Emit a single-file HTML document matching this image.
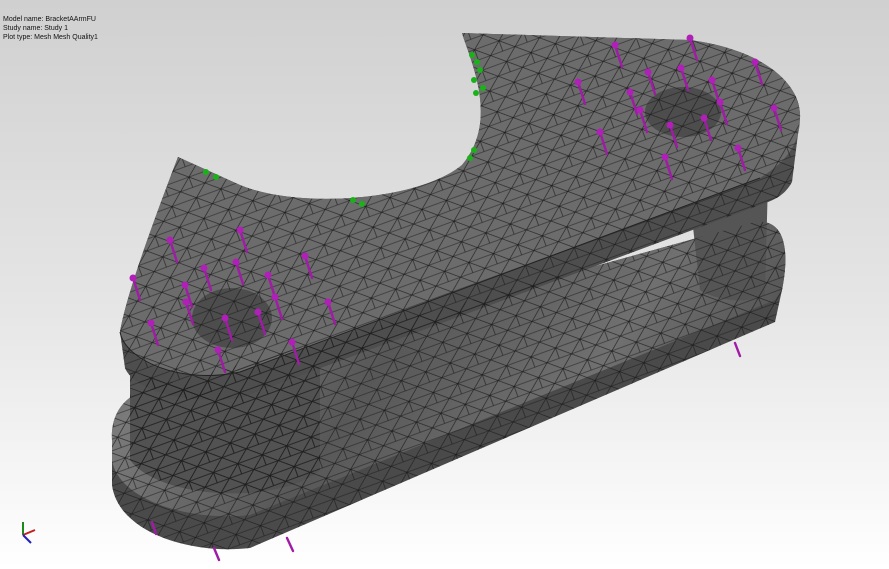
<!DOCTYPE html>
<html><head><style>
html,body{margin:0;padding:0;width:889px;height:569px;overflow:hidden;background:#fff}
.t{position:absolute;left:3px;font:7px/9px "Liberation Sans",sans-serif;color:#111}
</style></head><body>
<svg width="889" height="569" style="position:absolute;left:0;top:0">
<defs>
<linearGradient id="bg" x1="0" y1="0" x2="0" y2="1">
<stop offset="0" stop-color="#d0d0d0"/><stop offset="0.55" stop-color="#e6e6e6"/><stop offset="1" stop-color="#ffffff"/></linearGradient>
<pattern id="mesh" width="26" height="22" patternUnits="userSpaceOnUse" patternTransform="rotate(-20)">
<path d="M0,0 L26,0 M0,11 L26,11 M0,22 L26,22 M0,0 L13,11 L0,22 M13,11 L26,0 M13,11 L26,22 M13,-11 L13,0 M13,11 L13,22" stroke="#1c1c1c" stroke-width="0.6" fill="none"/>
</pattern>
<linearGradient id="bp" x1="0" y1="0" x2="1" y2="0.3">
<stop offset="0" stop-color="#5a5a5a"/><stop offset="0.2" stop-color="#7a7a7a"/><stop offset="0.5" stop-color="#585858"/><stop offset="0.8" stop-color="#707070"/><stop offset="1" stop-color="#555"/></linearGradient>
</defs>
<rect width="889" height="569" fill="url(#bg)"/>
<path d="M112,440 C110,405 135,388 165,385 L755,222 C785,218 790,250 782,290 L775,322 L250,548 C190,555 118,532 112,485 Z" fill="#4a4a4a"/>
<path d="M112,440 C110,405 135,388 165,385 L755,222 C785,218 790,250 782,290 L775,300 L250,515 C190,522 118,500 112,460 Z" fill="url(#bp)"/>
<path d="M130,370 L320,360 L320,470 C280,505 160,500 130,460 Z" fill="#525252"/>
<path d="M690,200 L768,180 L765,295 C745,305 715,300 700,290 Z" fill="#555"/>
<path d="M178,157 L240,185 C300,210 420,200 462,165 C500,120 470,60 462,33 L690,40 C765,50 802,85 800,118 L792,182 C785,195 775,200 760,205 L240,398 C190,405 135,392 125,368 L120,332 C125,300 150,230 178,157 Z" fill="#4e4e4e"/>
<path d="M178,157 L240,185 C300,210 420,200 462,165 C500,120 470,60 462,33 L690,40 C765,50 802,85 800,118 C800,140 790,160 760,178 L240,372 C180,385 125,362 120,332 C125,300 150,230 178,157 Z" fill="#6c6c6c"/>
<ellipse cx="232" cy="318" rx="40" ry="30" fill="#4d4d4d"/>
<ellipse cx="683" cy="112" rx="38" ry="25" fill="#4d4d4d"/>
<path d="M112,440 C110,405 135,388 165,385 L755,222 C785,218 790,250 782,290 L775,322 L250,548 C190,555 118,532 112,485 Z" fill="url(#mesh)"/>
<path d="M178,157 L240,185 C300,210 420,200 462,165 C500,120 470,60 462,33 L690,40 C765,50 802,85 800,118 L792,182 C785,195 775,200 760,205 L240,398 C190,405 135,392 125,368 L120,332 C125,300 150,230 178,157 Z" fill="url(#mesh)"/>
<path d="M130,372 L240,398 L320,372 L320,470 C280,505 160,500 130,460 Z" fill="url(#mesh)"/>
<path d="M240,372 L760,178 M120,332 C125,360 180,385 240,372" stroke="#222" stroke-width="1" fill="none"/>
<g fill="#19b219">
<circle cx="472" cy="55" r="3"/><circle cx="477" cy="62" r="3"/><circle cx="480" cy="70" r="3"/><circle cx="474" cy="80" r="3"/><circle cx="483" cy="88" r="3"/><circle cx="476" cy="93" r="3"/>
<circle cx="474" cy="150" r="3"/><circle cx="470" cy="158" r="3"/><circle cx="353" cy="200" r="3"/><circle cx="362" cy="204" r="3"/><circle cx="206" cy="172" r="3"/><circle cx="216" cy="177" r="3"/>
</g>
<g stroke="#a01ba6" stroke-width="2.4" stroke-linecap="round">
<path d="M690,38 l7,22 M615,45 l7,22 M648,72 l7,22 M681,68 l7,22 M712,80 l7,22 M755,62 l7,22 M578,82 l7,22 M630,92 l7,22 M720,102 l7,22 M774,108 l7,22 M640,110 l7,22 M670,125 l7,22 M704,118 l7,22 M600,132 l7,22 M738,148 l7,22 M665,157 l7,22 M240,230 l7,22 M170,240 l7,22 M305,256 l7,22 M204,268 l7,22 M236,262 l7,22 M268,275 l7,22 M133,278 l7,22 M185,285 l7,22 M275,297 l7,22 M186,302 l7,22 M328,302 l7,22 M225,318 l7,22 M258,312 l7,22 M151,323 l7,22 M292,342 l7,22 M218,350 l7,22 M735,343 l5,13 M152,522 l4,12 M214,548 l5,12 M287,538 l6,13"/>
</g>
<g fill="#b020b8">
<circle cx="690" cy="38" r="3.5"/><circle cx="615" cy="45" r="3.5"/><circle cx="648" cy="72" r="3.5"/><circle cx="681" cy="68" r="3.5"/><circle cx="712" cy="80" r="3.5"/><circle cx="755" cy="62" r="3.5"/><circle cx="578" cy="82" r="3.5"/><circle cx="630" cy="92" r="3.5"/><circle cx="720" cy="102" r="3.5"/><circle cx="774" cy="108" r="3.5"/><circle cx="640" cy="110" r="3.5"/><circle cx="670" cy="125" r="3.5"/><circle cx="704" cy="118" r="3.5"/><circle cx="600" cy="132" r="3.5"/><circle cx="738" cy="148" r="3.5"/><circle cx="665" cy="157" r="3.5"/><circle cx="240" cy="230" r="3.5"/><circle cx="170" cy="240" r="3.5"/><circle cx="305" cy="256" r="3.5"/><circle cx="204" cy="268" r="3.5"/><circle cx="236" cy="262" r="3.5"/><circle cx="268" cy="275" r="3.5"/><circle cx="133" cy="278" r="3.5"/><circle cx="185" cy="285" r="3.5"/><circle cx="275" cy="297" r="3.5"/><circle cx="186" cy="302" r="3.5"/><circle cx="328" cy="302" r="3.5"/><circle cx="225" cy="318" r="3.5"/><circle cx="258" cy="312" r="3.5"/><circle cx="151" cy="323" r="3.5"/><circle cx="292" cy="342" r="3.5"/><circle cx="218" cy="350" r="3.5"/>
</g>
<path d="M23,535 L23,522" stroke="#1a8a1a" stroke-width="2"/>
<path d="M23,535 L35,530" stroke="#c02020" stroke-width="2"/>
<path d="M23,535 L31,543" stroke="#2020c0" stroke-width="2"/>
</svg>
<div class="t" style="top:15px">Model name: BracketAArmFU<br>Study name: Study 1<br>Plot type: Mesh Mesh Quality1</div>
</body></html>
